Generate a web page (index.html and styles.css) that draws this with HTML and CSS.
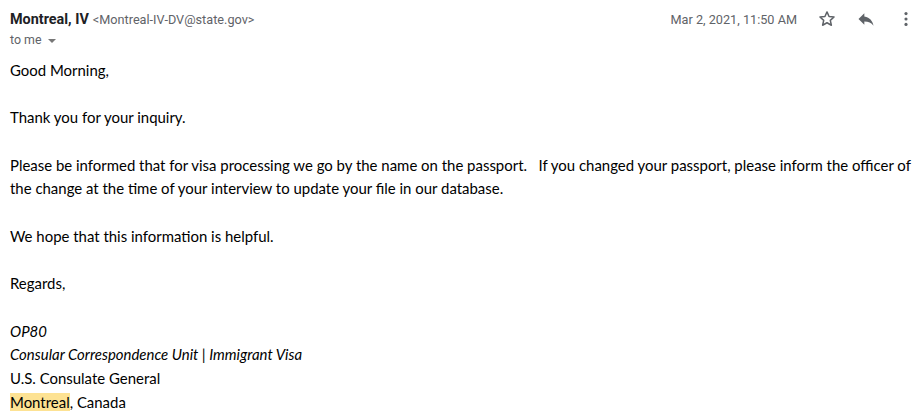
FILE: index.html
```
<!DOCTYPE html>
<html>
<head>
<meta charset="utf-8">
<link rel="stylesheet" href="styles.css">
</head>
<body>
<div class="mail">
  <div class="head">
    <div class="from">
      <div class="sender"><span class="name">Montreal, IV</span> <span class="addr">&lt;Montreal-IV-DV@state.gov&gt;</span></div>
      <div class="to">to me <svg class="caret" width="10" height="6" viewBox="0 0 10 6"><path d="M1 1h8L5 5z" fill="#777"/></svg></div>
    </div>
    <div class="meta">
      <span class="date">Mar 2, 2021, 11:50 AM</span>
      <svg class="icon star" width="20" height="20" viewBox="0 0 24 24"><path d="M12 3.5l2.47 5.5 5.98.6-4.5 4.02 1.3 5.88L12 16.5l-5.25 3 1.3-5.88-4.5-4.02 5.98-.6z" fill="none" stroke="#5f6368" stroke-width="1.8" stroke-linejoin="round"/></svg>
      <svg class="icon reply" width="20" height="20" viewBox="0 0 24 24"><path d="M10 9V5l-7 7 7 7v-4.1c5 0 8.5 1.6 11 5.1-1-5-4-10-11-11z" fill="#5f6368"/></svg>
      <svg class="icon more" width="20" height="20" viewBox="0 0 24 24"><circle cx="12" cy="5.5" r="1.9" fill="#5f6368"/><circle cx="12" cy="12" r="1.9" fill="#5f6368"/><circle cx="12" cy="18.5" r="1.9" fill="#5f6368"/></svg>
    </div>
  </div>
  <div class="body">
    <p>Good Morning,</p>
    <p>Thank you for your inquiry.</p>
    <p>Please be informed that for visa processing we go by the name on the passport.&nbsp;&nbsp; If you changed your passport, please inform the officer of<br>the change at the time of your interview to update your file in our database.</p>
    <p>We hope that this information is helpful.</p>
    <p>Regards,</p>
    <p><i>OP80</i><br><i>Consular Correspondence Unit | Immigrant Visa</i><br>U.S. Consulate General<br><span class="hl">Montreal</span>, Canada</p>
  </div>
</div>
</body>
</html>
```
FILE: styles.css
```
html, body { margin: 0; padding: 0; background: #fff; overflow: hidden; }
.mail { padding: 0 10px; }
.head { display: flex; justify-content: space-between; align-items: flex-start; padding-top: 10px; font-family: Roboto, "Liberation Sans", sans-serif; }
.sender { line-height: 18px; }
.name { font-weight: bold; font-size: 14.4px; color: #202124; }
.addr { font-size: 12.7px; color: #5f6368; }
.to { font-size: 12.4px; color: #5f6368; line-height: 20px; margin-top: 1px; display: flex; align-items: center; gap: 5px; }
.caret { margin-top: 1px; }
.meta { display: flex; align-items: center; margin-top: -1px; }
.date { font-size: 12.7px; color: #5f6368; margin-right: 20px; }
.icon { display: block; }
.star { margin-right: 19px; }
.reply { margin-right: 20px; }
.more { margin-right: -4px; }
.body { font-family: Lato, "Open Sans", sans-serif; font-size: 14.95px; line-height: 23.7px; color: #000; margin-top: 9px; }
.body p { margin: 0 0 23.7px 0; white-space: nowrap; }
.body p:last-child { margin-bottom: 0; }
.hl { background: #fde293; }
```
